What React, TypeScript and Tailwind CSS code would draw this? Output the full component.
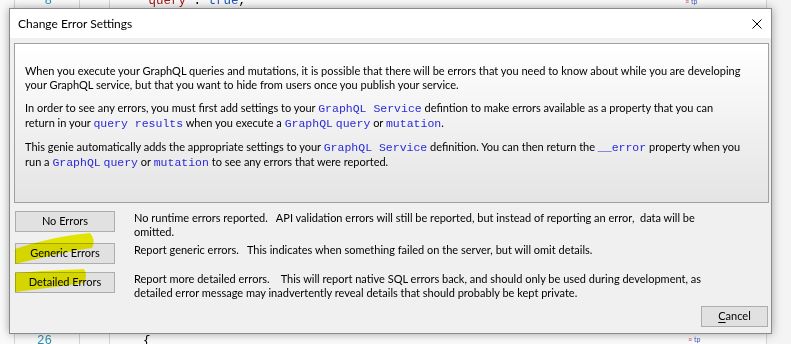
import React from "react";

const ui = { fontFamily: "Lato, 'Liberation Sans', sans-serif" };
const mono = { fontFamily: "'Liberation Mono', monospace" };

function M({ children }: { children: React.ReactNode }) {
  return (
    <span className="text-[11.5px] text-[#2a2ad8]" style={mono}>
      {children}
    </span>
  );
}

function WinButton({ label, underline }: { label: string; underline?: boolean }) {
  return (
    <div className="flex h-[21px] w-full items-center justify-center border border-[#adadad] bg-[#e1e1e1] text-[11px] text-black">
      {underline ? (
        <span>
          <span className="underline underline-offset-2">{label[0]}</span>
          {label.slice(1)}
        </span>
      ) : (
        label
      )}
    </div>
  );
}

function Row({ h, label, lines }: { h: string; label: string; lines: string[] }) {
  return (
    <div className={`flex items-start ${h}`}>
      <div className="ml-[5px] w-[100px] shrink-0">
        <WinButton label={label} />
      </div>
      <div className="ml-[19px] whitespace-pre text-[11px] leading-[14px] text-black">
        {lines.map((l, i) => (
          <div key={i}>{l}</div>
        ))}
      </div>
    </div>
  );
}

export default function App() {
  return (
    <div className="relative h-[344px] w-[791px] overflow-hidden bg-[#fafafa]" style={ui}>
      {/* editor behind the dialog */}
      <div className="flex h-full w-full text-[12.5px]" style={mono}>
        <div className="h-full w-[15px] border-r border-[#d4d4d4]" />
        <div className="flex h-full w-[65px] flex-col justify-between border-r border-[#d4d4d4] pr-[27px] text-right text-[#2b91af]">
          <div className="-mt-[7px] h-[16px] leading-[16px]">8</div>
          <div className="-mb-[5px] h-[16px] leading-[16px]">26</div>
        </div>
        <div className="h-full w-[30px] border-r border-[#d4d4d4]" />
        <div className="relative flex h-full w-[657px] flex-col justify-between border-r border-[#d4d4d4] pl-[31px]">
          <div className="-mt-[7px] h-[16px] whitespace-pre leading-[16px]">
            <span className="text-[#a31515]">"query"</span>
            <span className="text-black">: </span>
            <span className="text-[#1c55b8]">true</span>
            <span className="text-black">,</span>
          </div>
          <div className="-mb-[5px] h-[16px] pl-[2px] leading-[16px] text-black">{"{"}</div>
          <div className="absolute left-[575px] top-[-3px] flex gap-[2px] text-[7px] leading-[8px]" style={ui}>
            <span className="text-[#d04040]">≡</span>
            <span className="text-[#4060c0]">tp</span>
          </div>
          <div className="absolute bottom-[1px] left-[578px] flex gap-[2px] text-[7px] leading-[8px]" style={ui}>
            <span className="text-[#d04040]">≡</span>
            <span className="text-[#4060c0]">tp</span>
          </div>
        </div>
        <div className="h-full flex-1 bg-[#f4f4f4]" />
      </div>

      {/* dialog window */}
      <div className="absolute left-[9px] top-[8px] flex h-[326px] w-[763px] flex-col border border-[#8a8a8a] bg-[#f0f0f0] shadow-[0_0_9px_rgba(0,0,0,0.35)]">
        <div className="flex h-[29px] shrink-0 items-center justify-between bg-white pl-[8px] pr-[9px]">
          <span className="text-[12px] text-black">Change Error Settings</span>
          <svg width="10" height="10" viewBox="0 0 10 10" className="mt-[1px]">
            <path d="M0.5 0.5 L9.5 9.5 M9.5 0.5 L0.5 9.5" stroke="#000" strokeWidth="1" fill="none" />
          </svg>
        </div>

        <div className="flex flex-1 flex-col">
          <div className="ml-[4px] mr-[2px] mt-[5px] h-[160px] border border-[#a0a0a0] bg-gradient-to-b from-white to-[#e4e4e4] pl-[10px] pt-[20px] text-[11px] leading-[14px] text-black">
            <p className="whitespace-nowrap">
              When you execute your GraphQL queries and mutations, it is possible that there will be errors that you need to know about while you are developing
              <br />
              your GraphQL service, but that you want to hide from users once you publish your service.
            </p>
            <p className="mt-[9px] whitespace-nowrap">
              In order to see any errors, you must first add settings to your <M>GraphQL Service</M> defintion to make errors available as a property that you can
              <br />
              return in your <M>query results</M> when you execute a <M>GraphQL</M> <M>query</M> or <M>mutation</M>.
            </p>
            <p className="mt-[9px] whitespace-nowrap">
              This genie automatically adds the appropriate settings to your <M>GraphQL Service</M> definition. You can then return the <M>__error</M> property when you
              <br />
              run a <M>GraphQL</M> <M>query</M> or <M>mutation</M> to see any errors that were reported.
            </p>
          </div>

          <div className="mt-[8px] flex flex-col">
            <Row
              h="h-[32px]"
              label="No Errors"
              lines={[
                "No runtime errors reported.   API validation errors will still be reported, but instead of reporting an error,  data will be",
                "omitted.",
              ]}
            />
            <Row
              h="h-[29px]"
              label="Generic Errors"
              lines={["Report generic errors.   This indicates when something failed on the server, but will omit details."]}
            />
            <Row
              h="h-[28px]"
              label="Detailed Errors"
              lines={[
                "Report more detailed errors.    This will report native SQL errors back, and should only be used during development, as",
                "detailed error message may inadvertently reveal details that should probably be kept private.",
              ]}
            />
          </div>

          <div className="mr-[3px] mt-[6px] w-[67px] self-end">
            <WinButton label="Cancel" underline />
          </div>
        </div>
      </div>

      {/* highlighter marks */}
      <svg className="pointer-events-none absolute left-0 top-0 mix-blend-multiply" width="791" height="344" viewBox="0 0 791 344">
        <path d="M15 249 C35 242 60 236 90 233 Q96 240 92 248 C70 251 45 257 15 264 Z" fill="#f2f200" />
        <path d="M15 273 C40 271 62 270 84 269 Q88 276 84 283 C62 286 40 289 15 292 Z" fill="#f2f200" />
      </svg>
    </div>
  );
}
